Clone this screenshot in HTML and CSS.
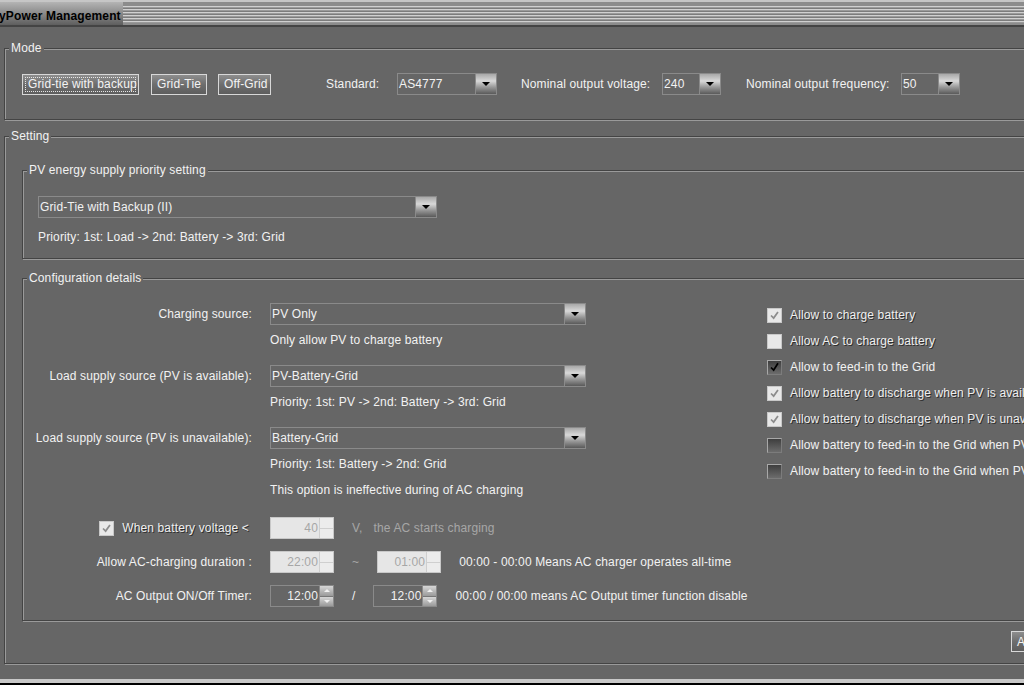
FILE: index.html
```html
<!DOCTYPE html>
<html lang="en">
<head>
  <meta charset="UTF-8">
  <title>MyPower Management</title>
  <link rel="stylesheet" href="styles.css">
</head>
<body>
<div class="page">
  <!-- title bar -->
  <div class="titlebar">
    <span class="title">yPower Management</span>
    <span class="stripes"></span>
  </div>

  <!-- mode -->
  <fieldset class="group mode">
    <legend>Mode</legend>
    <div class="mode-row">
      <button class="btn focused w-gtb">Grid-tie with backup</button>
      <button class="btn w-gt">Grid-Tie</button>
      <button class="btn w-og">Off-Grid</button>
      <span class="mode-label l-std">Standard:</span>
      <div class="combo c-std"><span class="value">AS4777</span><span class="arrow"></span></div>
      <span class="mode-label l-volt">Nominal output voltage:</span>
      <div class="combo c-small"><span class="value">240</span><span class="arrow"></span></div>
      <span class="mode-label l-freq">Nominal output frequency:</span>
      <div class="combo c-small"><span class="value">50</span><span class="arrow"></span></div>
    </div>
  </fieldset>

  <!-- setting -->
  <fieldset class="group setting">
    <legend>Setting</legend>
    <div class="setting-inner">

      <fieldset class="group pv">
        <legend>PV energy supply priority setting</legend>
        <div class="pv-inner">
          <div class="combo c-pv"><span class="value">Grid-Tie with Backup (II)</span><span class="arrow"></span></div>
          <div class="pv-note">Priority: 1st: Load -&gt; 2nd: Battery -&gt; 3rd: Grid</div>
        </div>
      </fieldset>

      <fieldset class="group config">
        <legend>Configuration details</legend>
        <div class="config-inner">
          <div class="form-col">
            <div class="field-block">
              <div class="field-row">
                <span class="field-label">Charging source:</span>
                <div class="combo c-cfg"><span class="value">PV Only</span><span class="arrow"></span></div>
              </div>
              <div class="desc">Only allow PV to charge battery</div>
            </div>
            <div class="field-block">
              <div class="field-row">
                <span class="field-label">Load supply source (PV is available):</span>
                <div class="combo c-cfg"><span class="value">PV-Battery-Grid</span><span class="arrow"></span></div>
              </div>
              <div class="desc">Priority: 1st: PV -&gt; 2nd: Battery -&gt; 3rd: Grid</div>
            </div>
            <div class="field-block">
              <div class="field-row">
                <span class="field-label">Load supply source (PV is unavailable):</span>
                <div class="combo c-cfg"><span class="value">Battery-Grid</span><span class="arrow"></span></div>
              </div>
              <div class="desc">Priority: 1st: Battery -&gt; 2nd: Grid</div>
              <div class="desc">This option is ineffective during of AC charging</div>
            </div>

            <div class="spin-rows">
              <div class="field-row">
                <span class="field-label check-label">
                  <span class="check dis"><svg viewBox="0 0 15 15"><polyline points="3.5,7.5 6.5,10.5 11.5,3.5"/></svg></span>
                  <span class="emboss">When battery voltage &lt;</span>
                </span>
                <div class="spinner disabled"><span class="spin-value">40</span><span class="spin-btns"><i class="up"></i><i class="down"></i></span></div>
                <span class="sep muted unit">V,</span>
                <span class="muted">the AC starts charging</span>
              </div>
              <div class="field-row">
                <span class="field-label">Allow AC-charging duration :</span>
                <div class="spinner disabled"><span class="spin-value">22:00</span><span class="spin-btns"><i class="up"></i><i class="down"></i></span></div>
                <span class="sep muted">~</span>
                <div class="spinner disabled"><span class="spin-value">01:00</span><span class="spin-btns"><i class="up"></i><i class="down"></i></span></div>
                <span class="hint">00:00 - 00:00 Means AC charger operates all-time</span>
              </div>
              <div class="field-row">
                <span class="field-label">AC Output ON/Off Timer:</span>
                <div class="spinner"><span class="spin-value">12:00</span><span class="spin-btns"><i class="up"></i><i class="down"></i></span></div>
                <span class="sep">/</span>
                <div class="spinner"><span class="spin-value">12:00</span><span class="spin-btns"><i class="up"></i><i class="down"></i></span></div>
                <span class="hint">00:00 / 00:00 means AC Output timer function disable</span>
              </div>
            </div>
          </div>

          <div class="checks">
            <div class="check-row">
              <span class="check dis"><svg viewBox="0 0 15 15"><polyline points="3.5,7.5 6.5,10.5 11.5,3.5"/></svg></span>
              <span class="emboss">Allow to charge battery</span>
            </div>
            <div class="check-row">
              <span class="check dis"></span>
              <span class="emboss">Allow AC to charge battery</span>
            </div>
            <div class="check-row">
              <span class="check"><svg viewBox="0 0 15 15"><polyline points="3.5,7.5 6.5,10.5 11.5,2.5"/></svg></span>
              <span>Allow to feed-in to the Grid</span>
            </div>
            <div class="check-row">
              <span class="check dis"><svg viewBox="0 0 15 15"><polyline points="3.5,7.5 6.5,10.5 11.5,3.5"/></svg></span>
              <span class="emboss">Allow battery to discharge when PV is available</span>
            </div>
            <div class="check-row">
              <span class="check dis"><svg viewBox="0 0 15 15"><polyline points="3.5,7.5 6.5,10.5 11.5,3.5"/></svg></span>
              <span class="emboss">Allow battery to discharge when PV is unavailable</span>
            </div>
            <div class="check-row">
              <span class="check"></span>
              <span>Allow battery to feed-in to the Grid when PV is available</span>
            </div>
            <div class="check-row">
              <span class="check"></span>
              <span>Allow battery to feed-in to the Grid when PV is unavailable</span>
            </div>
          </div>
        </div>
      </fieldset>

      <div class="actions">
        <button class="btn">Apply</button>
      </div>
    </div>
  </fieldset>

  <div class="statusbar"></div>
</div>
</body>
</html>
```

FILE: styles.css
```css
body {
  margin: 0;
  background-color: #666666;
  font-family: "Liberation Sans", Arial, sans-serif;
  font-size: 12px;
  letter-spacing: 0.14px;
  color: #f2f2f2;
  overflow: hidden;
}

.page {
  width: 1140px;
  height: 685px;
}

/* title bar */
.titlebar {
  display: flex;
  height: 27px;
  box-sizing: border-box;
  border-top: 2px solid #c6c6c6;
  border-bottom: 2px solid #444444;
  background-color: #8c8c8c;
}

.title {
  width: 124px;
  margin-left: -1px;
  padding-top: 5px;
  line-height: 18px;
  font-weight: bold;
  color: #000000;
  white-space: nowrap;
  background: linear-gradient(#b4b4b4, #8e8e8e 45%, #5e5e5e);
}

.stripes {
  flex: 1;
  margin: 4px 0 2px;
  background: repeating-linear-gradient(#d0d0d0 0 1px, #9a9a9a 1px 2px, #7c7c7c 2px 3px);
}

/* etched titled groups */
.group {
  margin: 0;
  padding: 0;
  min-width: 0;
  border: 1px solid #444444;
  box-shadow: inset 1px 1px 0 #9a9a9a, 1px 1px 0 #9a9a9a;
}

.group legend {
  margin-left: 4px;
  padding: 0 2px;
  line-height: 14px;
  background-color: #666666;
}

.mode {
  margin: 14px 0 0 4px;
}

.setting {
  margin: 9px 0 0 4px;
}

/* buttons */
.btn {
  height: 21px;
  padding: 0 5px;
  box-sizing: border-box;
  border: 1px solid #d8d8d8;
  background: linear-gradient(#8e8e8e, #6e6e6e 50%, #5e5e5e);
  color: #f4f4f4;
  font-family: inherit;
  font-size: 12px;
  letter-spacing: inherit;
  white-space: nowrap;
}

.btn.focused {
  outline: 1px dotted #e6e6e6;
  outline-offset: -4px;
}

/* mode row */
.mode-row {
  display: flex;
  align-items: center;
  height: 22px;
  padding: 18px 0 24px 17px;
}

.w-gtb { width: 117px; }
.w-gt { width: 56px; margin-left: 12px; }
.w-og { width: 53px; margin-left: 11px; }

.mode-label {
  white-space: nowrap;
}

.l-std { width: 71px; margin-left: 55px; }
.l-volt { width: 141px; margin-left: 24px; }
.l-freq { width: 155px; margin-left: 25px; }

/* combo box */
.combo {
  display: flex;
  height: 22px;
  box-sizing: border-box;
  border: 1px solid #8a8a8a;
  flex-shrink: 0;
}

.combo .value {
  flex: 1;
  padding-left: 1px;
  line-height: 20px;
  white-space: nowrap;
  overflow: hidden;
}

.combo .arrow {
  position: relative;
  width: 20px;
  border-left: 1px solid #8a8a8a;
  background: linear-gradient(#a8a8a8, #d8d8d8 35%, #9a9a9a 65%, #5a5a5a);
}

.combo .arrow::after {
  content: "";
  position: absolute;
  left: 6px;
  top: 8px;
  border-left: 4px solid transparent;
  border-right: 4px solid transparent;
  border-top: 4px solid #000000;
}

.c-std { width: 100px; }
.c-small { width: 59px; }
.c-pv { width: 399px; }
.c-cfg { width: 316px; }

/* pv group */
.pv-inner {
  padding: 19px 0 10px 15px;
}

.pv-note {
  margin-top: 8px;
  line-height: 22px;
}

.setting-inner {
  padding: 20px 0 11px 17px;
}

/* configuration group */
.config {
  margin: 12px 0 0 0;
}

.config-inner {
  display: flex;
  padding-bottom: 13px;
}

.form-col {
  width: 744px;
  padding-top: 18px;
  flex-shrink: 0;
}

.field-block + .field-block {
  margin-top: 12px;
}

.field-row {
  display: flex;
  align-items: center;
  height: 22px;
  white-space: nowrap;
}

.field-label {
  width: 229px;
  margin-right: 18px;
  text-align: right;
  flex-shrink: 0;
}

.check-label {
  display: flex;
  align-items: center;
  justify-content: flex-end;
  box-sizing: border-box;
  padding-right: 3px;
}

.desc {
  margin-left: 247px;
  line-height: 26px;
}

.field-row + .desc {
  margin-top: 2px;
}

.spin-rows {
  margin-top: 14px;
}

.spin-rows .field-row + .field-row {
  margin-top: 12px;
}

/* spinner */
.spinner {
  display: flex;
  width: 64px;
  height: 22px;
  box-sizing: border-box;
  border: 1px solid #8a8a8a;
  flex-shrink: 0;
}

.spin-value {
  flex: 1;
  padding-right: 1px;
  text-align: right;
  line-height: 20px;
}

.spin-btns {
  display: flex;
  flex-direction: column;
  width: 13px;
  border-left: 1px solid #8a8a8a;
}

.spin-btns i {
  flex: 1;
  display: flex;
  align-items: center;
  justify-content: center;
  background: linear-gradient(#d6d6d6, #9a9a9a);
}

.spin-btns i + i {
  border-top: 1px solid #777777;
}

.spin-btns .up::after {
  content: "";
  border-left: 3px solid transparent;
  border-right: 3px solid transparent;
  border-bottom: 3px solid #f0f0f0;
}

.spin-btns .down::after {
  content: "";
  border-left: 3px solid transparent;
  border-right: 3px solid transparent;
  border-top: 3px solid #f0f0f0;
}

.spinner.disabled {
  background-color: #e6e6e6;
  border-color: #c8c8c8;
  color: #a6a6a6;
}

.spinner.disabled .spin-btns {
  border-left-color: #cfcfcf;
}

.spinner.disabled .spin-btns i {
  background: #ececec;
}

.spinner.disabled .spin-btns i + i {
  border-top-color: #cfcfcf;
}

.spinner.disabled .spin-btns i::after {
  display: none;
}

.sep {
  margin: 0 18px;
}

.unit {
  margin-right: 11px;
}

.hint {
  margin-left: 18px;
}

.muted {
  color: #a6a6a6;
}

/* check boxes */
.checks {
  padding-top: 17px;
}

.check-row {
  display: flex;
  align-items: center;
  height: 26px;
  white-space: nowrap;
}

.check {
  width: 15px;
  height: 15px;
  margin-right: 8px;
  box-sizing: border-box;
  border: 1px solid #a8a8a8;
  border-right-color: #7c7c7c;
  border-bottom-color: #7c7c7c;
  background: linear-gradient(#3e3e3e, #6c6c6c);
  flex-shrink: 0;
}

.check svg {
  display: block;
  width: 13px;
  height: 13px;
  overflow: visible;
}

.check polyline {
  fill: none;
  stroke: #000000;
  stroke-width: 2;
}

.check.dis {
  background: #e8e8e8;
  border-color: #c8c8c8;
}

.check.dis polyline {
  stroke: #8c8c8c;
}

.emboss {
  color: #efefef;
  text-shadow: 1px 1px 0 #2e2e2e;
}

/* apply row */
.actions {
  margin-top: 10px;
  padding-left: 989px;
}

.statusbar {
  margin-top: 15px;
  height: 4px;
  background-color: #c8c8c8;
  border-bottom: 2px solid #000000;
}
```
